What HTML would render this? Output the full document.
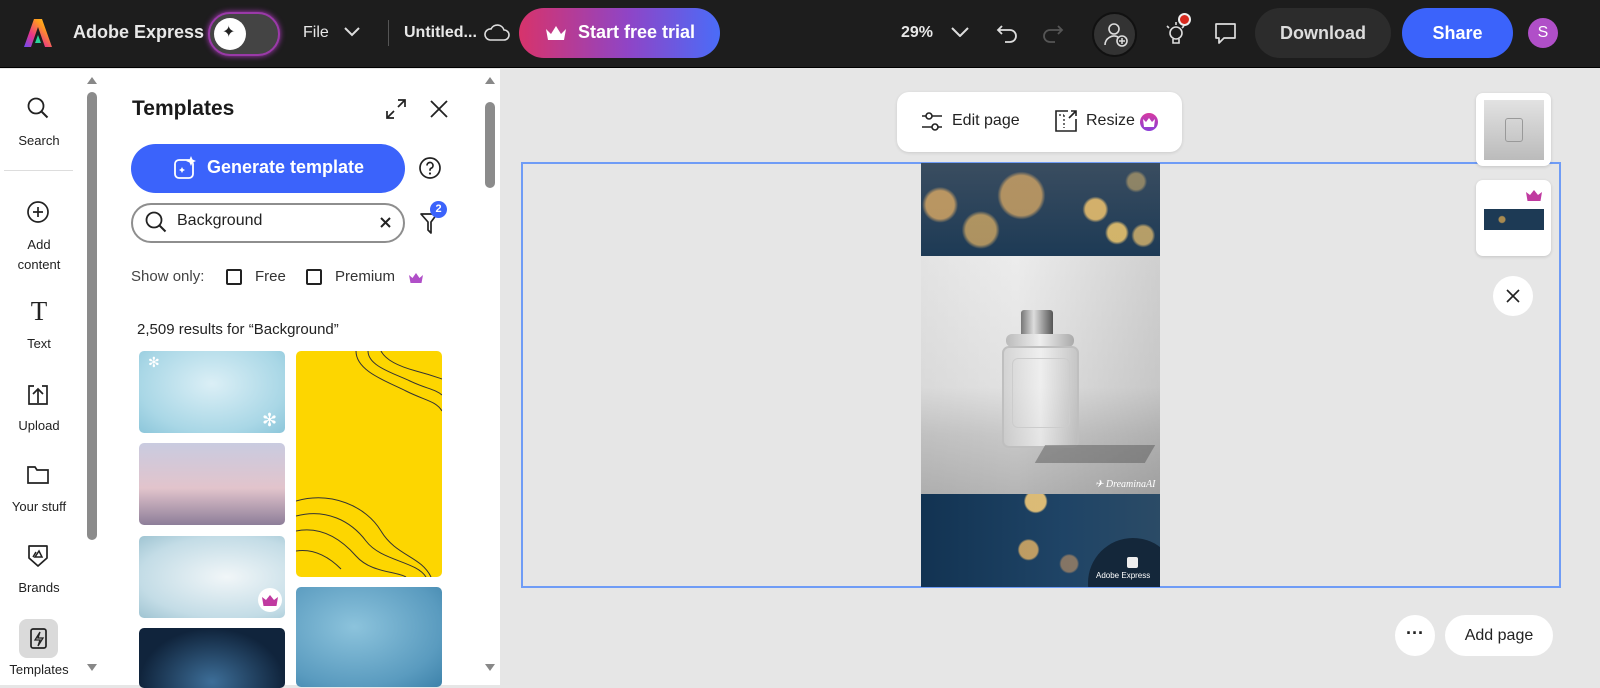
<!DOCTYPE html>
<html><head><meta charset="utf-8"><style>
*{box-sizing:border-box;margin:0;padding:0}
body{width:1600px;height:685px;overflow:hidden;font-family:"Liberation Sans",sans-serif;background:#e6e6e6;position:relative;color:#222}
.a{position:absolute}
.top{left:0;top:0;width:1600px;height:68px;background:#1d1d1d;border-bottom:1px solid #000}
.wt{color:#e8e8e8;font-size:16px;font-weight:bold}
.rail{left:0;top:69px;width:100px;height:616px;background:#fff}
.rl{width:78px;text-align:center;font-size:13px;color:#222}
.panel{left:100px;top:69px;width:400px;height:616px;background:#fff}
.tile{border-radius:5px;overflow:hidden}
</style></head><body>
<div class="a top"></div>
<svg class="a" style="left:22px;top:17px" width="32" height="32" viewBox="0 0 32 32"><defs><linearGradient id="lg" x1="0" y1="1" x2="1" y2="0"><stop offset="0" stop-color="#6a4cf5"/><stop offset=".35" stop-color="#e9338a"/><stop offset=".7" stop-color="#ff9a1f"/><stop offset="1" stop-color="#ffd21f"/></linearGradient></defs><path d="M12 2h8l10 28h-7l-7-20-7 20H2z" fill="url(#lg)"/><path d="M16 18l3 8h-6z" fill="#2ad29a"/></svg>
<div class="a wt" style="left:73px;top:22px;font-size:18px">Adobe Express</div>
<div class="a" style="left:208px;top:12px;width:72px;height:44px;border-radius:22px;background:#444;border:2px solid #9a3aa8;box-shadow:0 0 6px #b03ac0"></div>
<div class="a" style="left:214px;top:18px;width:32px;height:32px;border-radius:50%;background:#fff"></div>
<div class="a" style="left:222px;top:22px;font-size:16px;color:#222">✦</div>
<div class="a wt" style="left:303px;top:24px;font-weight:normal">File</div>
<svg class="a" style="left:344px;top:27px" width="16" height="10"><path d="M1 1l7 7 7-7" stroke="#ddd" stroke-width="2" fill="none"/></svg>
<div class="a" style="left:388px;top:20px;width:1px;height:26px;background:#555"></div>
<div class="a wt" style="left:404px;top:24px">Untitled...</div>
<svg class="a" style="left:484px;top:22px" width="26" height="22"><path d="M6 18h14a5 5 0 0 0 0-10 7 7 0 0 0-13-1 5 5 0 0 0-1 11z" stroke="#ddd" stroke-width="1.6" fill="none"/></svg>
<div class="a" style="left:519px;top:8px;width:201px;height:50px;border-radius:25px;background:linear-gradient(90deg,#d7336b,#8e45c7 55%,#4a6cf8)"></div>
<svg class="a" style="left:545px;top:25px" width="22" height="16"><path d="M1 4l5 5 5-8 5 8 5-5-2 11H3z" fill="#fff"/></svg>
<div class="a" style="left:578px;top:22px;color:#fff;font-size:18px;font-weight:bold">Start free trial</div>
<div class="a wt" style="left:901px;top:24px">29%</div>
<svg class="a" style="left:951px;top:27px" width="18" height="10"><path d="M1 1l8 8 8-8" stroke="#ddd" stroke-width="2" fill="none"/></svg>
<svg class="a" style="left:996px;top:22px" width="24" height="24"><path d="M6 4L2 8l4 4M2 8h12a6 6 0 0 1 0 12H9" stroke="#ddd" stroke-width="1.8" fill="none"/></svg>
<svg class="a" style="left:1040px;top:22px" width="24" height="24"><path d="M18 4l4 4-4 4M22 8H10a6 6 0 0 0 0 12h5" stroke="#555" stroke-width="1.8" fill="none"/></svg>
<div class="a" style="left:1092px;top:12px;width:45px;height:45px;border-radius:50%;background:#333;border:2px solid #111"></div>
<svg class="a" style="left:1103px;top:22px" width="26" height="26"><circle cx="11" cy="7" r="5" stroke="#ddd" stroke-width="1.6" fill="none"/><path d="M2 23a9 9 0 0 1 13-8" stroke="#ddd" stroke-width="1.6" fill="none"/><circle cx="19" cy="19" r="5" stroke="#ddd" stroke-width="1.6" fill="none"/><path d="M19 16v6M16 19h6" stroke="#ddd" stroke-width="1.5"/></svg>
<svg class="a" style="left:1162px;top:18px" width="30" height="30"><circle cx="14" cy="15" r="6" stroke="#ddd" stroke-width="1.6" fill="none"/><path d="M11 21v4h6v-4M5 8l2 2M14 4v3M22 8l-2 2" stroke="#ddd" stroke-width="1.6" fill="none"/></svg>
<div class="a" style="left:1178px;top:13px;width:13px;height:13px;border-radius:50%;background:#d7291e;border:2px solid #eee"></div>
<svg class="a" style="left:1213px;top:21px" width="26" height="26"><path d="M3 3h19v14H11l-5 5v-5H3z" stroke="#ddd" stroke-width="1.7" fill="none" stroke-linejoin="round"/></svg>
<div class="a" style="left:1255px;top:8px;width:136px;height:50px;border-radius:25px;background:#2c2c2c;color:#ddd;font-size:18px;font-weight:bold;text-align:center;line-height:50px">Download</div>
<div class="a" style="left:1402px;top:8px;width:111px;height:50px;border-radius:25px;background:#3b63fb;color:#fff;font-size:18px;font-weight:bold;text-align:center;line-height:50px">Share</div>
<div class="a" style="left:1528px;top:18px;width:30px;height:30px;border-radius:50%;background:#b04fc8;color:#fff;font-size:16px;text-align:center;line-height:30px">S</div>

<div class="a rail"></div>
<div class="a" style="left:87px;top:77px;width:0;height:0;border:5px solid transparent;border-bottom:7px solid #888;border-top:0"></div>
<div class="a" style="left:87px;top:92px;width:10px;height:448px;border-radius:5px;background:#8b8b8b"></div>
<div class="a" style="left:87px;top:664px;width:0;height:0;border:5px solid transparent;border-top:7px solid #888;border-bottom:0"></div>
<svg class="a" style="left:26px;top:96px" width="24" height="24"><circle cx="10" cy="10" r="7.5" stroke="#222" stroke-width="1.8" fill="none"/><path d="M15.5 15.5l6 6" stroke="#222" stroke-width="2"/></svg>
<div class="a rl" style="left:0;top:133px">Search</div>
<div class="a" style="left:4px;top:170px;width:69px;height:1px;background:#ddd"></div>
<svg class="a" style="left:26px;top:200px" width="24" height="24"><circle cx="12" cy="12" r="10" stroke="#222" stroke-width="1.7" fill="none"/><path d="M12 7v10M7 12h10" stroke="#222" stroke-width="1.7"/></svg>
<div class="a rl" style="left:0;top:235px;line-height:20px">Add<br>content</div>
<div class="a" style="left:0;top:296px;width:78px;text-align:center;font-family:'Liberation Serif',serif;font-size:27px">T</div>
<div class="a rl" style="left:0;top:336px">Text</div>
<svg class="a" style="left:26px;top:383px" width="24" height="24"><path d="M8 3H3v18h18V3h-5M12 20V7M7 11l5-5 5 5" stroke="#222" stroke-width="1.7" fill="none"/></svg>
<div class="a rl" style="left:0;top:418px">Upload</div>
<svg class="a" style="left:26px;top:464px" width="24" height="22"><path d="M2 3h7l2 3h11v13H2z" stroke="#222" stroke-width="1.7" fill="none"/></svg>
<div class="a rl" style="left:0;top:499px">Your stuff</div>
<svg class="a" style="left:27px;top:544px" width="22" height="24"><path d="M2 2h18v12l-9 8-9-8z" stroke="#222" stroke-width="1.7" fill="none" stroke-linejoin="round"/><path d="M8 13l4-6 3 6z M6 13l3-5" stroke="#222" stroke-width="1.5" fill="none"/></svg>
<div class="a rl" style="left:0;top:580px">Brands</div>
<div class="a" style="left:19px;top:619px;width:39px;height:39px;border-radius:8px;background:#dadada"></div>
<svg class="a" style="left:29px;top:627px" width="20" height="24"><rect x="2" y="2" width="15" height="19" rx="2" stroke="#222" stroke-width="1.7" fill="none"/><path d="M11 5l-5 8h5l-2 6 5-8h-5z" stroke="#222" stroke-width="1.3" fill="none"/></svg>
<div class="a rl" style="left:0;top:662px">Templates</div>

<div class="a panel"></div>
<div class="a" style="left:485px;top:77px;width:0;height:0;border:5px solid transparent;border-bottom:7px solid #888;border-top:0"></div>
<div class="a" style="left:485px;top:102px;width:10px;height:86px;border-radius:5px;background:#8b8b8b"></div>
<div class="a" style="left:485px;top:664px;width:0;height:0;border:5px solid transparent;border-top:7px solid #888;border-bottom:0"></div>
<div class="a" style="left:132px;top:97px;font-size:21px;font-weight:bold;color:#1a1a1a">Templates</div>
<svg class="a" style="left:385px;top:98px" width="22" height="22"><path d="M13 2h7v7M20 2l-7 7M9 20H2v-7M2 20l7-7" stroke="#222" stroke-width="1.7" fill="none"/></svg>
<svg class="a" style="left:430px;top:100px" width="18" height="18"><path d="M1 1l16 16M17 1L1 17" stroke="#222" stroke-width="1.8"/></svg>
<div class="a" style="left:131px;top:144px;width:274px;height:49px;border-radius:25px;background:#3b63fb"></div>
<svg class="a" style="left:173px;top:155px" width="26" height="26"><rect x="2" y="5" width="18" height="18" rx="4" stroke="#fff" stroke-width="1.8" fill="none"/><path d="M18 1l1.5 3.5L23 6l-3.5 1.5L18 11l-1.5-3.5L13 6l3.5-1.5zM9 12l1 2 2 1-2 1-1 2-1-2-2-1 2-1z" fill="#fff"/></svg>
<div class="a" style="left:207px;top:157px;color:#fff;font-size:18px;font-weight:bold">Generate template</div>
<svg class="a" style="left:418px;top:156px" width="24" height="24"><circle cx="12" cy="12" r="10" stroke="#222" stroke-width="1.7" fill="none"/><path d="M9 9.5a3 3 0 1 1 4 2.8c-.8.4-1 1-1 2v.5" stroke="#222" stroke-width="1.7" fill="none"/><circle cx="12" cy="17.5" r="1.1" fill="#222"/></svg>
<div class="a" style="left:131px;top:203px;width:274px;height:40px;border-radius:20px;border:2px solid #8e8e8e"></div>
<svg class="a" style="left:144px;top:210px" width="24" height="24"><circle cx="10" cy="10" r="7.5" stroke="#222" stroke-width="1.8" fill="none"/><path d="M15.5 15.5l6 6" stroke="#222" stroke-width="2"/></svg>
<div class="a" style="left:177px;top:212px;font-size:16px;color:#222">Background</div>
<svg class="a" style="left:380px;top:217px" width="11" height="11"><path d="M1 1l9 9M10 1L1 10" stroke="#222" stroke-width="2"/></svg>
<svg class="a" style="left:419px;top:212px" width="20" height="24"><path d="M2 2h16l-6 8v11l-3-3v-8z" stroke="#222" stroke-width="1.7" fill="none" stroke-linejoin="round"/></svg>
<div class="a" style="left:430px;top:201px;width:17px;height:17px;border-radius:50%;background:#3b63fb;color:#fff;font-size:11px;font-weight:bold;text-align:center;line-height:17px">2</div>
<div class="a" style="left:131px;top:268px;font-size:15px;color:#444">Show only:</div>
<div class="a" style="left:226px;top:269px;width:16px;height:16px;border:2px solid #222;border-radius:2px"></div>
<div class="a" style="left:255px;top:268px;font-size:15px;color:#333">Free</div>
<div class="a" style="left:306px;top:269px;width:16px;height:16px;border:2px solid #222;border-radius:2px"></div>
<div class="a" style="left:335px;top:268px;font-size:15px;color:#333">Premium</div>
<svg class="a" style="left:409px;top:273px" width="14" height="10"><path d="M0 2l3.5 3L7 0l3.5 5L14 2l-1.5 8h-11z" fill="#b04fc8"/></svg>
<div class="a" style="left:137px;top:321px;font-size:15px;color:#222">2,509 results for “Background”</div>
<div class="a tile" style="left:139px;top:351px;width:146px;height:82px;background:radial-gradient(ellipse at 50% 40%,#dbeff6,#a9d7e6 70%,#8cc6da)"></div>
<div class="a" style="left:148px;top:354px;color:#fff;font-size:14px">✻</div><div class="a" style="left:262px;top:410px;color:#fff;font-size:18px">✻</div>
<div class="a tile" style="left:139px;top:443px;width:146px;height:82px;background:linear-gradient(180deg,#c9cbe0,#e2c4cc 55%,#8d7e99)"></div>
<div class="a tile" style="left:139px;top:536px;width:146px;height:82px;background:radial-gradient(ellipse at 60% 50%,#f1f6f8,#c3dce6 70%,#9fc4d2)"></div>
<div class="a" style="left:258px;top:588px;width:24px;height:24px;border-radius:50%;background:#fff"></div>
<svg class="a" style="left:262px;top:595px" width="16" height="11"><path d="M0 2l4 3 4-5 4 5 4-3-1.5 9h-13z" fill="#c03aa0"/></svg>
<div class="a tile" style="left:139px;top:628px;width:146px;height:60px;background:radial-gradient(ellipse at 50% 90%,#3d6e98,#10243c 70%)"></div>
<div class="a tile" style="left:296px;top:351px;width:146px;height:226px;background:#fdd600">
<svg width="146" height="226"><g stroke="#333" stroke-width="1" fill="none"><path d="M60 0c0 20 30 30 50 40s30 10 36 20"/><path d="M72 0c0 15 25 22 42 30s25 8 32 14"/><path d="M85 0c5 10 20 16 35 20s20 6 26 8"/><path d="M0 165c30-8 55 5 70 25s50 20 60 36"/><path d="M0 180c25-5 45 8 60 25s40 15 50 21"/><path d="M0 200c20-3 35 8 45 18"/><path d="M0 150c35-10 70 5 85 30s40 25 50 46"/></g></svg></div>
<div class="a tile" style="left:296px;top:587px;width:146px;height:100px;background:radial-gradient(ellipse at 40% 40%,#8cc3dc,#5a9bbf 70%,#3d82aa)"></div>

<div class="a" style="left:897px;top:92px;width:285px;height:60px;background:#fff;border-radius:12px;box-shadow:0 1px 3px rgba(0,0,0,.12)"></div>
<svg class="a" style="left:920px;top:110px" width="24" height="24"><path d="M2 6h20M2 17h20" stroke="#222" stroke-width="1.6"/><circle cx="9" cy="6" r="3" fill="#fff" stroke="#222" stroke-width="1.6"/><circle cx="15" cy="17" r="3" fill="#fff" stroke="#222" stroke-width="1.6"/></svg>
<div class="a" style="left:952px;top:112px;font-size:16px;color:#222">Edit page</div>
<svg class="a" style="left:1054px;top:109px" width="24" height="24"><path d="M14 2H2v20h20V10" stroke="#222" stroke-width="1.6" fill="none"/><path d="M15 9l7-7M17 2h5v5" stroke="#222" stroke-width="1.6" fill="none"/><path d="M5 6h5M10 6v13" stroke="#222" stroke-width="1.3" stroke-dasharray="2 2"/></svg>
<div class="a" style="left:1086px;top:112px;font-size:16px;color:#222">Resize</div>
<div class="a" style="left:1140px;top:113px;width:18px;height:18px;border-radius:50%;background:linear-gradient(#d73aa0,#8a3ed8)"></div>
<svg class="a" style="left:1143px;top:118px" width="12" height="9"><path d="M0 1l3 3 3-4 3 4 3-3-1 8h-10z" fill="#fff"/></svg>

<div class="a" style="left:521px;top:162px;width:1040px;height:426px;border:2px solid #6f9cf6"></div>
<div class="a" style="left:921px;top:163px;width:239px;height:93px;background:radial-gradient(circle at 8% 45%,rgba(220,170,100,.8) 0 14px,transparent 18px),radial-gradient(circle at 42% 35%,rgba(210,165,100,.8) 0 20px,transparent 24px),radial-gradient(circle at 25% 72%,rgba(220,175,100,.75) 0 15px,transparent 19px),radial-gradient(circle at 73% 50%,rgba(240,195,110,.85) 0 10px,transparent 13px),radial-gradient(circle at 82% 75%,rgba(240,200,110,.85) 0 9px,transparent 12px),radial-gradient(circle at 93% 78%,rgba(230,190,110,.75) 0 9px,transparent 12px),radial-gradient(circle at 90% 20%,rgba(230,190,110,.5) 0 8px,transparent 11px),linear-gradient(#3a4d60,#1d3a55)"></div>
<div class="a" style="left:921px;top:256px;width:239px;height:238px;background:linear-gradient(90deg,rgba(0,0,0,.04),rgba(0,0,0,0) 40%,rgba(0,0,0,.12)),linear-gradient(180deg,#ececec,#e2e2e2 55%,#c8c8c8 75%,#b5b5b5)"></div>
<div class="a" style="left:1021px;top:310px;width:32px;height:30px;background:linear-gradient(90deg,#777,#ddd 40%,#999 70%,#555);border-radius:3px"></div>
<div class="a" style="left:1006px;top:334px;width:68px;height:13px;background:linear-gradient(90deg,#bbb,#eee,#aaa);border-radius:6px"></div>
<div class="a" style="left:1002px;top:346px;width:77px;height:102px;border:2px solid #bfbfbf;border-radius:7px;background:linear-gradient(90deg,rgba(205,205,205,.7),rgba(245,245,245,.7) 50%,rgba(190,190,190,.7))"></div>
<div class="a" style="left:1012px;top:358px;width:58px;height:70px;border:1px solid #ccc;border-radius:6px"></div>
<div class="a" style="left:1040px;top:445px;width:110px;height:18px;background:rgba(80,80,80,.45);transform:skewX(-30deg)"></div>
<div class="a" style="left:1095px;top:479px;color:#fff;font-size:10px;font-style:italic;font-family:'Liberation Serif',serif">✈ DreaminaAI</div>
<div class="a" style="left:921px;top:494px;width:239px;height:93px;background:radial-gradient(circle at 48% 8%,rgba(240,200,120,.9) 0 10px,transparent 12px),radial-gradient(circle at 45% 60%,rgba(230,180,100,.8) 0 9px,transparent 11px),radial-gradient(circle at 62% 75%,rgba(200,150,100,.6) 0 8px,transparent 10px),linear-gradient(90deg,#123352,#1f4466 60%,#2b4b66)"></div>
<div class="a" style="left:1088px;top:538px;width:90px;height:90px;border-radius:50%;background:#14273a;clip-path:inset(0 18px 41px 0)"></div>
<div class="a" style="left:1127px;top:557px;width:11px;height:11px;background:#eee;border-radius:2px"></div>
<div class="a" style="left:1096px;top:571px;color:#fff;font-size:8px">Adobe Express</div>

<div class="a" style="left:1476px;top:93px;width:75px;height:73px;background:#fff;border-radius:7px;box-shadow:0 1px 3px rgba(0,0,0,.15)"></div>
<div class="a" style="left:1484px;top:100px;width:60px;height:60px;background:linear-gradient(#e2e2e2,#bbb)"></div>
<div class="a" style="left:1505px;top:118px;width:18px;height:24px;border:1px solid #999;border-radius:3px"></div>
<div class="a" style="left:1476px;top:180px;width:75px;height:76px;background:#fff;border-radius:7px;box-shadow:0 1px 3px rgba(0,0,0,.15)"></div>
<div class="a" style="left:1484px;top:209px;width:60px;height:21px;background:radial-gradient(circle at 30% 50%,#a88a50 0 3px,transparent 4px),#1d3a55"></div>
<svg class="a" style="left:1526px;top:190px" width="16" height="11"><path d="M0 2l4 3 4-5 4 5 4-3-1.5 9h-13z" fill="#c03aa0"/></svg>
<div class="a" style="left:1493px;top:276px;width:40px;height:40px;border-radius:50%;background:#fff"></div>
<svg class="a" style="left:1506px;top:289px" width="14" height="14"><path d="M1 1l12 12M13 1L1 13" stroke="#222" stroke-width="1.6"/></svg>
<div class="a" style="left:1395px;top:615px;width:40px;height:41px;border-radius:50%;background:#fff;text-align:center;font-size:18px;font-weight:bold;line-height:36px">···</div>
<div class="a" style="left:1445px;top:615px;width:108px;height:41px;border-radius:21px;background:#fff;text-align:center;font-size:16px;line-height:41px;color:#222">Add page</div>
</body></html>
